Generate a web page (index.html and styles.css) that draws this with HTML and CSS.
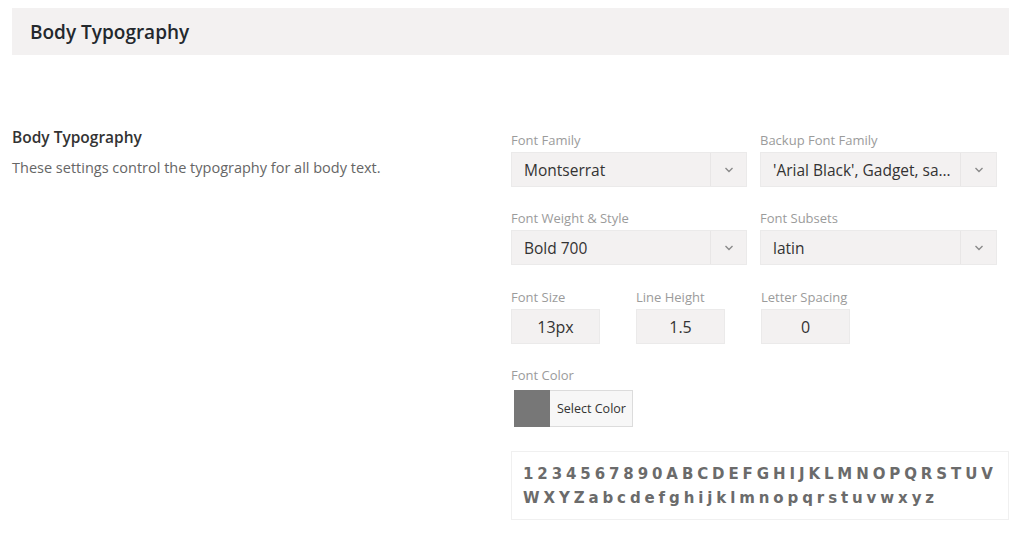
FILE: index.html
```html
<!DOCTYPE html>
<html>
<head>
<meta charset="utf-8">
<link rel="stylesheet" href="styles.css">
</head>
<body>
<div class="page">
  <div class="header"><h1 class="header-title">Body Typography</h1></div>
  <div class="section">
    <div class="intro">
      <h2 class="intro-title">Body Typography</h2>
      <p class="intro-desc">These settings control the typography for all body text.</p>
    </div>
    <div class="controls">
      <div class="grid2">
        <div class="field">
          <div class="label">Font Family</div>
          <div class="select"><span class="select-value">Montserrat</span><span class="select-arrow"><svg width="10" height="6" viewBox="0 0 10 6"><polyline points="1.5,1 5,4.5 8.5,1" fill="none" stroke="#8a8a8a" stroke-width="1.4"/></svg></span></div>
        </div>
        <div class="field">
          <div class="label">Backup Font Family</div>
          <div class="select"><span class="select-value">'Arial Black', Gadget, sans-serif</span><span class="select-arrow"><svg width="10" height="6" viewBox="0 0 10 6"><polyline points="1.5,1 5,4.5 8.5,1" fill="none" stroke="#8a8a8a" stroke-width="1.4"/></svg></span></div>
        </div>
        <div class="field">
          <div class="label">Font Weight &amp; Style</div>
          <div class="select"><span class="select-value">Bold 700</span><span class="select-arrow"><svg width="10" height="6" viewBox="0 0 10 6"><polyline points="1.5,1 5,4.5 8.5,1" fill="none" stroke="#8a8a8a" stroke-width="1.4"/></svg></span></div>
        </div>
        <div class="field">
          <div class="label">Font Subsets</div>
          <div class="select"><span class="select-value">latin</span><span class="select-arrow"><svg width="10" height="6" viewBox="0 0 10 6"><polyline points="1.5,1 5,4.5 8.5,1" fill="none" stroke="#8a8a8a" stroke-width="1.4"/></svg></span></div>
        </div>
      </div>
      <div class="grid3">
        <div class="field">
          <div class="label">Font Size</div>
          <div class="num">13px</div>
        </div>
        <div class="field">
          <div class="label">Line Height</div>
          <div class="num">1.5</div>
        </div>
        <div class="field">
          <div class="label">Letter Spacing</div>
          <div class="num">0</div>
        </div>
      </div>
      <div class="field color-field">
        <div class="label">Font Color</div>
        <div class="color-btn"><span class="swatch"></span><span class="color-text">Select Color</span></div>
      </div>
      <div class="preview">1234567890ABCDEFGHIJKLMNOPQRSTUV<br>WXYZabcdefghijklmnopqrstuvwxyz</div>
    </div>
  </div>
</div>
</body>
</html>
```
FILE: styles.css
```css
* { box-sizing: border-box; }
html, body { margin: 0; padding: 0; background: #fff; }
body {
  font-family: "Open Sans", "Noto Sans", sans-serif;
  color: #333;
}
.page {
  width: 1024px;
  height: 554px;
  padding: 8px 15px 0 12px;
  overflow: hidden;
}
.header {
  height: 47px;
  background: #f3f1f1;
  display: flex;
  align-items: center;
  padding-left: 18px;
}
.header-title {
  margin: 0;
  font-size: 19px;
  font-weight: 600;
  color: #23282d;
}
.section {
  display: flex;
  padding-top: 72px;
}
.intro {
  width: 499px;
  flex: none;
}
.intro-title {
  margin: 0;
  font-size: 15.5px;
  font-weight: 600;
  color: #333;
  line-height: 20px;
}
.intro-desc {
  margin: 11px 0 0;
  font-size: 14.5px;
  line-height: 20px;
  color: #666;
}
.controls {
  flex: none;
  width: 498px;
  padding-top: 3px;
  display: flex;
  flex-direction: column;
}
.grid2 {
  display: grid;
  grid-template-columns: 236px 237px;
  column-gap: 13px;
  row-gap: 21px;
}
.label {
  font-size: 13px;
  line-height: 20px;
  color: #9b9b9b;
  margin-bottom: 2px;
}
.select {
  height: 35px;
  background: #f3f1f1;
  border: 1px solid #ebeaea;
  display: flex;
  align-items: center;
}
.select-value {
  flex: 1;
  min-width: 0;
  padding-left: 12px;
  padding-right: 8px;
  font-size: 15.5px;
  color: #333;
  white-space: nowrap;
  overflow: hidden;
  text-overflow: ellipsis;
}
.select-arrow {
  width: 36px;
  height: 100%;
  border-left: 1px solid #e8e6e6;
  display: flex;
  align-items: center;
  justify-content: center;
  flex: none;
}
.select-arrow svg { display: block; }
.grid3 {
  margin-top: 22px;
  display: grid;
  grid-template-columns: 125px 125px 125px;
}
.num {
  width: 89px;
  height: 35px;
  background: #f3f1f1;
  border: 1px solid #ebeaea;
  display: flex;
  align-items: center;
  justify-content: center;
  font-size: 16px;
  color: #333;
}
.color-field { margin-top: 21px; }
.color-field .label { margin-bottom: 5px; }
.color-btn {
  margin-left: 3px;
  width: 119px;
  height: 37px;
  border: 1px solid #dcdcdc;
  background: #f7f7f7;
  display: flex;
  align-items: stretch;
}
.swatch {
  width: 36px;
  background: #777;
  margin: -1px 0 -1px -1px;
}
.color-text {
  display: flex;
  align-items: center;
  padding-left: 7px;
  font-size: 12.5px;
  color: #333;
}
.preview {
  margin-top: 24px;
  height: 69px;
  border: 1px solid #f0f0f0;
  padding: 10px 11px;
  font-family: "DejaVu Sans", sans-serif;
  font-weight: bold;
  font-size: 15px;
  line-height: 24px;
  letter-spacing: 3.9px;
  color: #6b6b6b;
  white-space: nowrap;
}
```
